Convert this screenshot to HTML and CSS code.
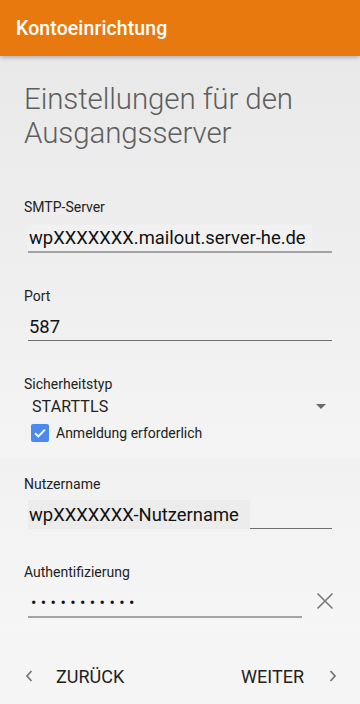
FILE: index.html
```html
<!DOCTYPE html>
<html lang="de">
<head>
<meta charset="utf-8">
<link rel="stylesheet" href="styles.css">
</head>
<body>
<div class="app">
  <header class="appbar"><span class="appbar-title">Kontoeinrichtung</span></header>
  <main class="content">
    <section class="upper">
      <h1 class="heading">Einstellungen für den Ausgangsserver</h1>
      <div class="field field-smtp">
        <div class="label">SMTP-Server</div>
        <div class="input input-thick"><span class="value value-bg value-smtp">wpXXXXXXX.mailout.server-he.de</span></div>
      </div>
      <div class="field field-port">
        <div class="label">Port</div>
        <div class="input input-thin"><span class="value">587</span></div>
      </div>
      <div class="field field-sec">
        <div class="label">Sicherheitstyp</div>
        <div class="select"><span class="select-value">STARTTLS</span><span class="select-arrow"></span></div>
        <label class="check">
          <span class="checkbox"><svg width="18" height="18" viewBox="0 0 18 18"><path d="M4 9.2 L7.4 12.4 L14 5.6" fill="none" stroke="#fff" stroke-width="2"/></svg></span>
          <span class="check-text">Anmeldung erforderlich</span>
        </label>
      </div>
    </section>
    <section class="lower">
      <div class="field field-user">
        <div class="label">Nutzername</div>
        <div class="input input-thin"><span class="value value-bg value-user">wpXXXXXXX-Nutzername</span></div>
      </div>
      <div class="field field-auth">
        <div class="label">Authentifizierung</div>
        <div class="pw-row">
          <div class="input input-thick pw-input"><span class="value dots">•••••••••••</span></div>
          <svg class="clear" width="18" height="18" viewBox="0 0 18 18"><path d="M1.5 1.5 L16.5 16.5 M16.5 1.5 L1.5 16.5" stroke="#7a7a7a" stroke-width="1.6" fill="none"/></svg>
        </div>
      </div>
    </section>
  </main>
  <footer class="nav">
    <div class="nav-btn">
      <svg width="10" height="14" viewBox="0 0 10 14"><path d="M7.5 2 L3 7 L7.5 12" stroke="#777" stroke-width="1.8" fill="none"/></svg>
      <span class="nav-text nav-back">ZURÜCK</span>
    </div>
    <div class="nav-btn">
      <span class="nav-text nav-next">WEITER</span>
      <svg width="10" height="14" viewBox="0 0 10 14"><path d="M2.5 2 L7 7 L2.5 12" stroke="#777" stroke-width="1.8" fill="none"/></svg>
    </div>
  </footer>
</div>
</body>
</html>
```

FILE: styles.css
```css
* { box-sizing: border-box; margin: 0; padding: 0; }
html, body { width: 360px; height: 704px; overflow: hidden; }
body { font-family: Roboto, "Noto Sans", sans-serif; background: #f5f5f5; color: #222; }
.app { display: flex; flex-direction: column; height: 704px; }
.appbar {
  height: 56px; flex: none; background: #e8790f; display: flex; align-items: center;
  padding-left: 16px; position: relative; z-index: 2;
  box-shadow: 0 2px 4px rgba(0,0,0,0.22);
}
.appbar-title { color: #fff; font-size: 19.5px; font-weight: 500; letter-spacing: 0.1px; }
.content { flex: 1; display: flex; flex-direction: column; }
.upper {
  height: 402px; flex: none; padding: 26px 28px 0 24px;
  background: linear-gradient(#e9e9e9, #f4f4f4);
}
.lower {
  flex: 1; padding: 0 28px 0 24px;
  background: linear-gradient(#f1f1f1, #f6f6f6);
}
.heading {
  font-weight: 300; font-size: 29.5px; line-height: 34px; color: #5e5e5e;
  width: 300px; margin-bottom: 49px; letter-spacing: -0.1px;
}
.label { font-size: 14px; color: #222; line-height: 16px; height: 16px; }
.input { display: flex; align-items: flex-end; margin-left: 4px; }
.input-thick { height: 38px; border-bottom: 2px solid #a3a3a3; }
.input-thin { height: 37px; border-bottom: 1px solid #6f6f6f; }
.value {
  font-size: 18.4px; color: #111; line-height: 26px; padding-left: 1px;
}
.value-bg { background: #f1f1f1; }
.value-smtp { padding-right: 6px; }
.field-port { margin-top: 35px; }
.field-sec { margin-top: 35px; }
.select { display: flex; align-items: center; justify-content: space-between; height: 28px; margin-left: 8px; padding-right: 6px; }
.select-value { font-size: 16px; color: #222; letter-spacing: 0.1px; }
.select-arrow { width: 0; height: 0; border-left: 5px solid transparent; border-right: 5px solid transparent; border-top: 5px solid #6a6a6a; }
.check { display: flex; align-items: center; margin-left: 7px; margin-top: 4px; }
.checkbox { width: 18px; height: 18px; background: #4a89f0; border-radius: 2px; display: flex; }
.check-text { font-size: 14px; margin-left: 7px; color: #222; }
.field-user { padding-top: 18px; }
.value-user { background: #ececec; padding-right: 11px; margin-bottom: -1px; padding-bottom: 1px; padding-top: 2px; }
.field-auth { margin-top: 35px; }
.pw-row { display: flex; align-items: center; }
.pw-input { flex: 1; margin-right: 14px; }
.dots { font-size: 16px; letter-spacing: 4.4px; padding-left: 3px; color: #111; }
.clear { margin-right: -2px; margin-top: 4px; }
.nav {
  height: 72px; flex: none; display: flex; align-items: center; justify-content: space-between;
  padding: 16px 22px 0 24px; background: #f5f5f5;
}
.nav-btn { display: flex; align-items: center; }
.nav-text { font-size: 18px; color: #222; }
.nav-back { margin-left: 22px; }
.nav-next { margin-right: 24px; }
```
